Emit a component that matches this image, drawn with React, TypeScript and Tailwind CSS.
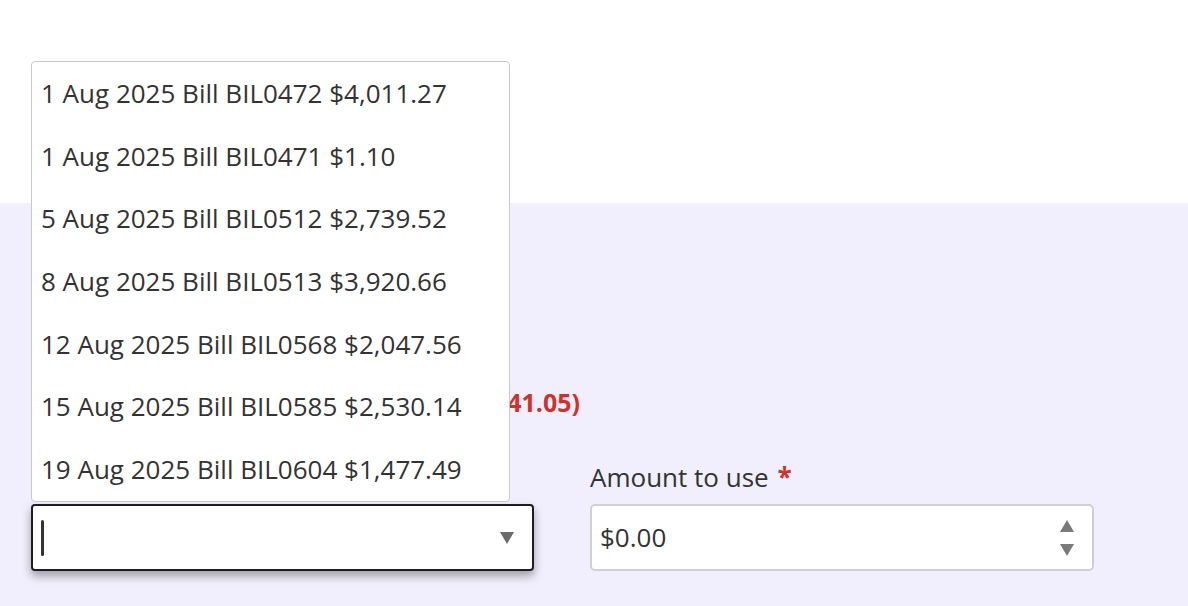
import React from "react";

const bills = [
  "1 Aug 2025 Bill BIL0472 $4,011.27",
  "1 Aug 2025 Bill BIL0471 $1.10",
  "5 Aug 2025 Bill BIL0512 $2,739.52",
  "8 Aug 2025 Bill BIL0513 $3,920.66",
  "12 Aug 2025 Bill BIL0568 $2,047.56",
  "15 Aug 2025 Bill BIL0585 $2,530.14",
  "19 Aug 2025 Bill BIL0604 $1,477.49",
];

const App = () => {
  return (
    <div className="min-h-[606px] bg-[#f1effd] font-['Open_Sans',sans-serif] text-[#333333]">
      <div className="h-[203px] bg-white" />
      {/**Form */}
      <div className="pl-[31px] pt-[183px]">
        <div className="w-[549px] text-right">
          <p className="text-[25px] leading-8 font-bold text-[#d2302a]">
            Remaining ($3,241.05)
          </p>
        </div>
        <div className="mt-[43px] flex gap-[56px]">
          <div className="w-[503px]">
            <label className="block h-8 text-[26px] leading-8">
              Bill <span className="text-[#d2302a]">*</span>
            </label>
            <div className="relative mt-[11px]">
              {/**Dropdown list */}
              <ul className="absolute left-0 bottom-[calc(100%+2px)] z-10 w-[479px] rounded-[4px] border border-[#c9c9cc] bg-white">
                {bills.map((b) => (
                  <li
                    key={b}
                    className="flex h-[62.7px] items-center pl-[9px] text-[26px] whitespace-nowrap"
                  >
                    {b}
                  </li>
                ))}
              </ul>
              <div className="flex h-[67px] items-center justify-between rounded-[4px] border-2 border-[#1d1d22] bg-white pl-[8px] pr-[18px] shadow-[0_5px_10px_rgba(0,0,0,0.35)]">
                <span className="h-[36px] w-[3px] rounded-full bg-[#333333]" />
                <svg width="14" height="12" viewBox="0 0 14 12">
                  <path d="M0 0 H14 L7 12 Z" fill="#6b6b6b" />
                </svg>
              </div>
            </div>
          </div>
          <div className="w-[504px]">
            <label className="block h-8 text-[26px] leading-8">
              Amount to use <span className="ml-0.5 font-bold text-[#d2302a]">*</span>
            </label>
            <div className="mt-[11px] flex h-[67px] items-center justify-between rounded-[5px] border-2 border-[#cfcfd4] bg-white pl-[8px] pr-[18px]">
              <span className="text-[26px]">$0.00</span>
              <div className="flex flex-col gap-[12px]">
                <svg width="14" height="12" viewBox="0 0 14 12">
                  <path d="M0 12 H14 L7 0 Z" fill="#7a7a7a" />
                </svg>
                <svg width="14" height="12" viewBox="0 0 14 12">
                  <path d="M0 0 H14 L7 12 Z" fill="#7a7a7a" />
                </svg>
              </div>
            </div>
          </div>
        </div>
      </div>
    </div>
  );
};

export default App;
